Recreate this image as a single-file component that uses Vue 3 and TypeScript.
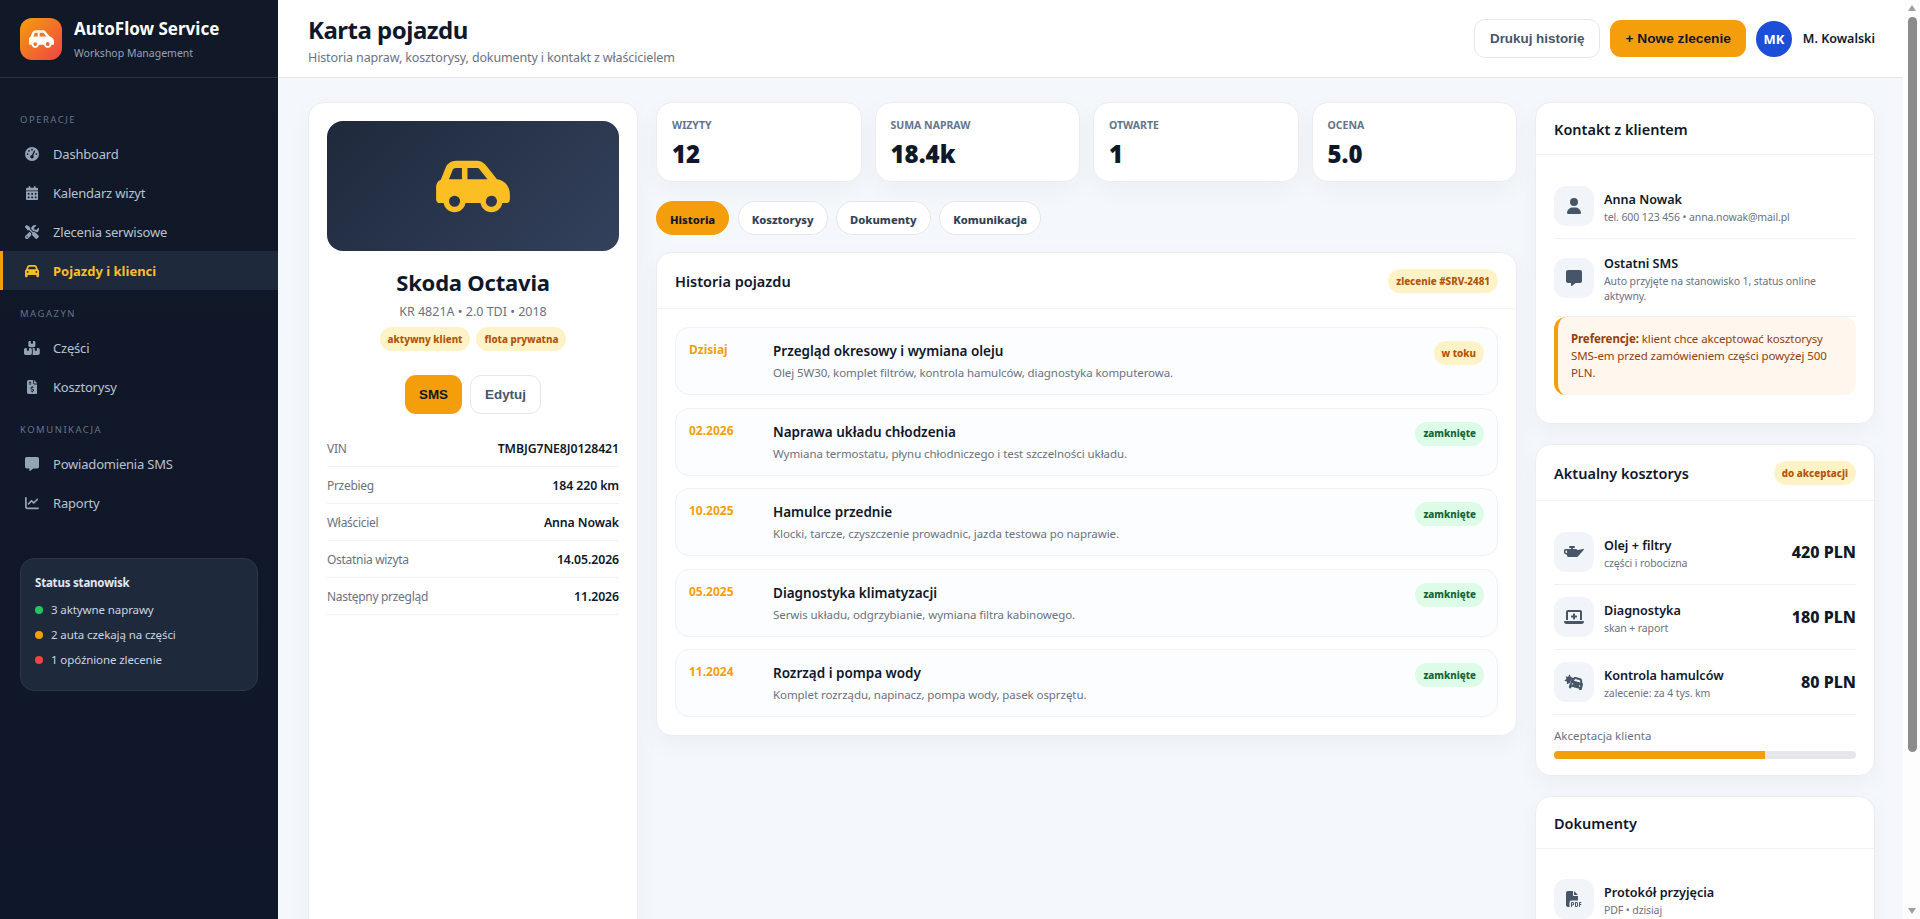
<script setup lang="ts">
interface NavItem { label: string; icon: string; active?: boolean }
interface NavGroup { title: string; items: NavItem[] }
interface Visit { date: string; title: string; desc: string; status: string; open?: boolean }
interface Cost { title: string; sub: string; price: string; icon: string }

const icons: Record<string, { box: string; d: string }> = {
  gauge: { box: '0 0 512 512', d: 'M0 256a256 256 0 1 1 512 0A256 256 0 1 1 0 256zM288 96a32 32 0 1 0 -64 0 32 32 0 1 0 64 0zM256 416c35.3 0 64-28.7 64-64c0-17.4-6.9-33.1-18.1-44.6L366 161.7c5.3-12.1-.2-26.3-12.3-31.6s-26.3 .2-31.6 12.3L257.9 288c-.6 0-1.3 0-1.9 0c-35.3 0-64 28.7-64 64s28.7 64 64 64zM176 144a32 32 0 1 0 -64 0 32 32 0 1 0 64 0zM96 288a32 32 0 1 0 0-64 32 32 0 1 0 0 64zm352-32a32 32 0 1 0 -64 0 32 32 0 1 0 64 0z' },
  calendar: { box: '0 0 448 512', d: 'M128 0c17.7 0 32 14.3 32 32V64H288V32c0-17.7 14.3-32 32-32s32 14.3 32 32V64h48c26.5 0 48 21.5 48 48v48H0V112C0 85.5 21.5 64 48 64H96V32c0-17.7 14.3-32 32-32zM0 192H448V464c0 26.5-21.5 48-48 48H48c-26.5 0-48-21.5-48-48V192zm64 80v32c0 8.8 7.2 16 16 16h32c8.8 0 16-7.2 16-16V272c0-8.8-7.2-16-16-16H80c-8.8 0-16 7.2-16 16zm128 0v32c0 8.8 7.2 16 16 16h32c8.8 0 16-7.2 16-16V272c0-8.8-7.2-16-16-16H208c-8.8 0-16 7.2-16 16zm144-16c-8.8 0-16 7.2-16 16v32c0 8.8 7.2 16 16 16h32c8.8 0 16-7.2 16-16V272c0-8.8-7.2-16-16-16H336zM64 400v32c0 8.8 7.2 16 16 16h32c8.8 0 16-7.2 16-16V400c0-8.8-7.2-16-16-16H80c-8.8 0-16 7.2-16 16zm144-16c-8.8 0-16 7.2-16 16v32c0 8.8 7.2 16 16 16h32c8.8 0 16-7.2 16-16V400c0-8.8-7.2-16-16-16H208zm112 16v32c0 8.8 7.2 16 16 16h32c8.8 0 16-7.2 16-16V400c0-8.8-7.2-16-16-16H336c-8.8 0-16 7.2-16 16z' },
  tools: { box: '0 0 512 512', d: 'M78.6 5C69.1-2.4 55.6-1.5 47 7L7 47c-8.5 8.5-9.4 22-2.1 31.6l80 104c4.5 5.9 11.6 9.4 19 9.4h54.1l109 109c-14.7 29-10 65.4 14.3 89.6l112 112c12.5 12.5 32.8 12.5 45.3 0l64-64c12.5-12.5 12.5-32.8 0-45.3l-112-112c-24.2-24.2-60.6-29-89.6-14.3l-109-109V104c0-7.5-3.5-14.5-9.4-19L78.6 5zM19.9 396.1C7.2 408.8 0 426.1 0 444.1C0 481.6 30.4 512 67.9 512c18 0 35.3-7.2 48-19.9L233.7 374.3c-7.8-20.9-9-43.6-3.6-65.1l-61.7-61.7L19.9 396.1zM512 144c0-10.5-1.1-20.7-3.2-30.5c-2.4-11.2-16.1-14.1-24.2-6l-63.9 63.9c-3 3-7.1 4.7-11.3 4.7H352c-8.8 0-16-7.2-16-16V102.6c0-4.2 1.7-8.3 4.7-11.3l63.9-63.9c8.1-8.1 5.2-21.8-6-24.2C388.7 1.1 378.5 0 368 0C288.5 0 224 64.5 224 144l0 .8 85.3 85.3c36-9.1 75.8 .5 104 28.7L429 274.5c49-23 83-72.8 83-130.5zM56 432a24 24 0 1 1 48 0 24 24 0 1 1 -48 0z' },
  car: { box: '0 0 512 512', d: 'M135.2 117.4L109.1 192H402.9l-26.1-74.6C372.3 104.6 360.2 96 346.6 96H165.4c-13.6 0-25.7 8.6-30.2 21.4zM39.6 196.8L74.8 96.3C88.3 57.8 124.6 32 165.4 32H346.6c40.8 0 77.1 25.8 90.6 64.3l35.2 100.5c23.2 9.6 39.6 32.5 39.6 59.2V400v48c0 17.7-14.3 32-32 32H448c-17.7 0-32-14.3-32-32V400H96v48c0 17.7-14.3 32-32 32H32c-17.7 0-32-14.3-32-32V400 256c0-26.7 16.4-49.6 39.6-59.2zM128 288a32 32 0 1 0 -64 0 32 32 0 1 0 64 0zm288 32a32 32 0 1 0 0-64 32 32 0 1 0 0 64z' },
  carSide: { box: '0 0 640 512', d: 'M171.3 96H224v96H111.3l30.4-75.9C146.5 104 158.2 96 171.3 96zM272 192V96h81.2c9.7 0 18.9 4.4 25 12l67.2 84H272zm256.2 1L428.2 68c-18.2-22.8-45.8-36-75-36H171.3c-39.3 0-74.6 23.9-89.1 60.3L40.6 196.4C16.8 205.8 0 228.9 0 256V368c0 17.7 14.3 32 32 32H65.3c7.6 45.4 47.1 80 94.7 80s87.1-34.6 94.7-80H385.3c7.6 45.4 47.1 80 94.7 80s87.1-34.6 94.7-80H608c17.7 0 32-14.3 32-32V320c0-65.2-48.8-119-111.8-127zM434.7 368a48 48 0 1 1 90.5 32 48 48 0 1 1 -90.5-32zM160 336a48 48 0 1 1 0 96 48 48 0 1 1 0-96z' },
  boxes: { box: '0 0 576 512', d: 'M248 0H208c-26.5 0-48 21.5-48 48V160c0 35.3 28.7 64 64 64H352c35.3 0 64-28.7 64-64V48c0-26.5-21.5-48-48-48H328V80c0 8.8-7.2 16-16 16H264c-8.8 0-16-7.2-16-16V0zM64 256c-35.3 0-64 28.7-64 64V448c0 35.3 28.7 64 64 64H224c35.3 0 64-28.7 64-64V320c0-35.3-28.7-64-64-64H184v80c0 8.8-7.2 16-16 16H120c-8.8 0-16-7.2-16-16V256H64zM352 512H512c35.3 0 64-28.7 64-64V320c0-35.3-28.7-64-64-64H472v80c0 8.8-7.2 16-16 16H408c-8.8 0-16-7.2-16-16V256H352c-15 0-28.8 5.1-39.6 13.8c4.9 10.4 7.6 22 7.6 34.2V464c0 18-6 34.6-16 48H352z' },
  invoice: { box: '0 0 384 512', d: 'M64 0C28.7 0 0 28.7 0 64V448c0 35.3 28.7 64 64 64H320c35.3 0 64-28.7 64-64V160H256c-17.7 0-32-14.3-32-32V0H64zM256 0V128H384L256 0zM64 80c0-8.8 7.2-16 16-16h64c8.8 0 16 7.2 16 16s-7.2 16-16 16H80c-8.8 0-16-7.2-16-16zm0 64c0-8.8 7.2-16 16-16h64c8.8 0 16 7.2 16 16s-7.2 16-16 16H80c-8.8 0-16-7.2-16-16zm128 72c8.8 0 16 7.2 16 16v17.3c8.5 1.2 16.7 3.1 24.1 5.1c8.5 2.3 13.6 11 11.3 19.6s-11 13.6-19.6 11.3c-11.1-3-22-5.2-32.1-5.3c-8.4-.1-17.4 1.8-23.6 5.5c-5.7 3.4-8.1 7.3-8.1 12.8c0 3.7 1.3 6.5 7.3 10.1c6.9 4.1 16.6 7.1 29.2 10.9l.5 .1 0 0 0 0c11.3 3.4 25.3 7.6 36.3 14.6c12.1 7.6 22.4 19.7 22.7 38.2c.3 19.3-9.6 33.3-22.9 41.6c-7.7 4.8-16.4 7.6-25.1 9.1V440c0 8.8-7.2 16-16 16s-16-7.2-16-16V422.2c-11.2-2.1-21.7-5.7-30.9-8.9l0 0c-2.1-.7-4.2-1.4-6.2-2.1c-8.4-2.8-12.9-11.9-10.1-20.2s11.9-12.9 20.2-10.1c2.5 .8 4.8 1.6 7.1 2.4l0 0 0 0 0 0c13.6 4.6 24.6 8.4 36.3 8.7c9.1 .3 17.9-1.7 23.7-5.3c5.1-3.2 7.9-7.3 7.8-14c-.1-4.6-1.8-7.8-7.7-11.6c-6.8-4.3-16.5-7.4-29-11.2l-1.6-.5 0 0c-11-3.3-24.3-7.3-34.8-13.7c-12-7.2-22.6-18.9-22.7-37.3c-.1-19.4 10.8-32.8 23.8-40.5c7.5-4.4 15.8-7.2 24.1-8.7V232c0-8.8 7.2-16 16-16z' },
  message: { box: '0 0 512 512', d: 'M64 0C28.7 0 0 28.7 0 64V352c0 35.3 28.7 64 64 64h96v80c0 6.1 3.4 11.6 8.8 14.3s11.9 2.1 16.8-1.5L309.3 416H448c35.3 0 64-28.7 64-64V64c0-35.3-28.7-64-64-64H64z' },
  chart: { box: '0 0 512 512', d: 'M64 64c0-17.7-14.3-32-32-32S0 46.3 0 64V400c0 44.2 35.8 80 80 80H480c17.7 0 32-14.3 32-32s-14.3-32-32-32H80c-8.8 0-16-7.2-16-16V64zm406.6 86.6c12.5-12.5 12.5-32.8 0-45.3s-32.8-12.5-45.3 0L320 210.7l-57.4-57.4c-12.5-12.5-32.8-12.5-45.3 0l-112 112c-12.5 12.5-12.5 32.8 0 45.3s32.8 12.5 45.3 0L240 221.3l57.4 57.4c12.5 12.5 32.8 12.5 45.3 0l128-128z' },
  user: { box: '0 0 448 512', d: 'M224 256A128 128 0 1 0 224 0a128 128 0 1 0 0 256zm-45.7 48C79.8 304 0 383.8 0 482.3C0 498.7 13.3 512 29.7 512H418.3c16.4 0 29.7-13.3 29.7-29.7C448 383.8 368.2 304 269.7 304H178.3z' },
  oil: { box: '0 0 640 512', d: 'M320 128c17.7 0 32-14.3 32-32s-14.3-32-32-32H192c-17.7 0-32 14.3-32 32s14.3 32 32 32h32v32H144 96 48c-26.5 0-48 21.5-48 48v64.8c0 19 11.2 36.2 28.5 43.9l67.5 30V368c0 26.5 21.5 48 48 48H403.1c18.4 0 35.8-7.9 48-21.7L633.5 187.7c12.3-13.9-.3-35.4-18.4-31.5L448 192l-50.5-25.2c-8.9-4.4-18.7-6.8-28.6-6.8H288V128h32zM96 208v86.1L48 272.8V208H96z' },
  laptop: { box: '0 0 640 512', d: 'M64 96c0-35.3 28.7-64 64-64H512c35.3 0 64 28.7 64 64V352H512V96H128V352H64V96zM0 403.2C0 392.6 8.6 384 19.2 384H620.8c10.6 0 19.2 8.6 19.2 19.2c0 42.4-34.4 76.8-76.8 76.8H76.8C34.4 480 0 445.6 0 403.2zM288 160c0-8.8 7.2-16 16-16h32c8.8 0 16 7.2 16 16v48h48c8.8 0 16 7.2 16 16v32c0 8.8-7.2 16-16 16H352v48c0 8.8-7.2 16-16 16H304c-8.8 0-16-7.2-16-16V272H240c-8.8 0-16-7.2-16-16V224c0-8.8 7.2-16 16-16h48V160z' },
  burst: { box: '0 0 640 512', d: 'M176 8L132 92L56 69L77 161L11 206L96 247L91 326L176 286L197 305L225 215L270 170L298 128L220 92ZM367.7 161.5l135.6 36.3c6.5 1.8 11.3 7.4 11.8 14.2l4.6 56.5-201.5-54 32.2-46.6c3.8-5.6 10.8-8.1 17.3-6.4zM297.8 131.5l-47.9 69.3c-21.6 3-40.3 18.6-46.3 41l-10.4 38.6-16.6 61.8-20.7 77.3c-4.6 17.1 5.6 34.6 22.6 39.2l15.5 4.1c17.1 4.6 34.6-5.6 39.2-22.6l8.3-30.9 247.3 66.3-8.3 30.9c-4.6 17.1 5.6 34.6 22.6 39.2l15.5 4.1c17.1 4.6 34.6-5.6 39.2-22.6l20.7-77.3 16.6-61.8 10.4-38.6c6-22.4-2.5-45.2-19.6-58.7l-6.8-84c-2.7-33.7-26.4-62-59-70.8L377.6 98.9c-32.6-8.7-67.3 4-79.8 32.6zM270 296a24 24 0 1 0 0 48 24 24 0 1 0 0-48zM500 358a24 24 0 1 0 0 48 24 24 0 1 0 0-48z' },
  pdf: { box: '0 0 512 512', d: 'M0 64C0 28.7 28.7 0 64 0H224V128c0 17.7 14.3 32 32 32H384V304H176c-35.3 0-64 28.7-64 64V512H64c-35.3 0-64-28.7-64-64V64zm384 64H256V0L384 128zM176 352h32c30.9 0 56 25.1 56 56s-25.1 56-56 56H192v32c0 8.8-7.2 16-16 16s-16-7.2-16-16V448 368c0-8.8 7.2-16 16-16zm32 80c13.3 0 24-10.7 24-24s-10.7-24-24-24H192v48h16zm96-80h32c26.5 0 48 21.5 48 48v64c0 26.5-21.5 48-48 48H304c-8.8 0-16-7.2-16-16V368c0-8.8 7.2-16 16-16zm32 128c8.8 0 16-7.2 16-16V400c0-8.8-7.2-16-16-16H320v96h16zm80-112c0-8.8 7.2-16 16-16h48c8.8 0 16 7.2 16 16s-7.2 16-16 16H448v32h32c8.8 0 16 7.2 16 16s-7.2 16-16 16H448v48c0 8.8-7.2 16-16 16s-16-7.2-16-16V432 368z' },
}

const nav: NavGroup[] = [
  { title: 'Operacje', items: [
    { label: 'Dashboard', icon: 'gauge' },
    { label: 'Kalendarz wizyt', icon: 'calendar' },
    { label: 'Zlecenia serwisowe', icon: 'tools' },
    { label: 'Pojazdy i klienci', icon: 'car', active: true },
  ] },
  { title: 'Magazyn', items: [
    { label: 'Części', icon: 'boxes' },
    { label: 'Kosztorysy', icon: 'invoice' },
  ] },
  { title: 'Komunikacja', items: [
    { label: 'Powiadomienia SMS', icon: 'message' },
    { label: 'Raporty', icon: 'chart' },
  ] },
]

const workshop = [
  { text: '3 aktywne naprawy', color: '#22c55e' },
  { text: '2 auta czekają na części', color: '#f59e0b' },
  { text: '1 opóźnione zlecenie', color: '#ef4444' },
]

const specs = [
  ['VIN', 'TMBJG7NE8J0128421'],
  ['Przebieg', '184 220 km'],
  ['Właściciel', 'Anna Nowak'],
  ['Ostatnia wizyta', '14.05.2026'],
  ['Następny przegląd', '11.2026'],
]

const stats = [
  ['Wizyty', '12'],
  ['Suma napraw', '18.4k'],
  ['Otwarte', '1'],
  ['Ocena', '5.0'],
]

const tabs = ['Historia', 'Kosztorysy', 'Dokumenty', 'Komunikacja']

const visits: Visit[] = [
  { date: 'Dzisiaj', title: 'Przegląd okresowy i wymiana oleju', desc: 'Olej 5W30, komplet filtrów, kontrola hamulców, diagnostyka komputerowa.', status: 'w toku', open: true },
  { date: '02.2026', title: 'Naprawa układu chłodzenia', desc: 'Wymiana termostatu, płynu chłodniczego i test szczelności układu.', status: 'zamknięte' },
  { date: '10.2025', title: 'Hamulce przednie', desc: 'Klocki, tarcze, czyszczenie prowadnic, jazda testowa po naprawie.', status: 'zamknięte' },
  { date: '05.2025', title: 'Diagnostyka klimatyzacji', desc: 'Serwis układu, odgrzybianie, wymiana filtra kabinowego.', status: 'zamknięte' },
  { date: '11.2024', title: 'Rozrząd i pompa wody', desc: 'Komplet rozrządu, napinacz, pompa wody, pasek osprzętu.', status: 'zamknięte' },
]

const costs: Cost[] = [
  { title: 'Olej + filtry', sub: 'części i robocizna', price: '420 PLN', icon: 'oil' },
  { title: 'Diagnostyka', sub: 'skan + raport', price: '180 PLN', icon: 'laptop' },
  { title: 'Kontrola hamulców', sub: 'zalecenie: za 4 tys. km', price: '80 PLN', icon: 'burst' },
]
</script>

<template>
  <div class="app">
    <aside class="sidebar">
      <div class="brand">
        <div class="brand-logo">
          <svg class="ico" :viewBox="icons.carSide.box" width="25" height="20"><path :d="icons.carSide.d" /></svg>
        </div>
        <div>
          <div class="brand-name">AutoFlow Service</div>
          <div class="brand-sub">Workshop Management</div>
        </div>
      </div>
      <nav class="nav">
        <div v-for="group in nav" :key="group.title" class="nav-group">
          <div class="nav-title">{{ group.title }}</div>
          <a v-for="item in group.items" :key="item.label" class="nav-item" :class="{ active: item.active }">
            <span class="nav-icon"><svg class="ico" :viewBox="icons[item.icon].box" height="14"><path :d="icons[item.icon].d" /></svg></span>
            {{ item.label }}
          </a>
        </div>
      </nav>
      <div class="workshop">
        <div class="workshop-title">Status stanowisk</div>
        <div v-for="row in workshop" :key="row.text" class="workshop-row">
          <span class="dot" :style="{ background: row.color }"></span>{{ row.text }}
        </div>
      </div>
    </aside>

    <main class="main">
      <header class="topbar">
        <div class="top-title">
          <h1>Karta pojazdu</h1>
          <p>Historia napraw, kosztorysy, dokumenty i kontakt z właścicielem</p>
        </div>
        <div class="top-actions">
          <button class="btn btn-light btn-print">Drukuj historię</button>
          <button class="btn btn-primary btn-new">+ Nowe zlecenie</button>
          <div class="avatar">MK</div>
          <span class="user-name">M. Kowalski</span>
        </div>
      </header>

      <div class="content">
        <section class="card vehicle">
          <div class="vehicle-photo">
            <svg class="ico" :viewBox="icons.carSide.box" width="74" height="59"><path :d="icons.carSide.d" /></svg>
          </div>
          <h2>Skoda Octavia</h2>
          <div class="vehicle-sub">KR 4821A • 2.0 TDI • 2018</div>
          <div class="vehicle-tags">
            <span class="pill">aktywny klient</span>
            <span class="pill">flota prywatna</span>
          </div>
          <div class="vehicle-btns">
            <button class="btn btn-primary btn-sms">SMS</button>
            <button class="btn btn-light btn-edit">Edytuj</button>
          </div>
          <div class="specs">
            <div v-for="[label, value] in specs" :key="label" class="spec">
              <span>{{ label }}</span><strong>{{ value }}</strong>
            </div>
          </div>
        </section>

        <div class="center">
          <div class="stats">
            <div v-for="[label, value] in stats" :key="label" class="card stat">
              <div class="stat-label">{{ label }}</div>
              <div class="stat-value">{{ value }}</div>
            </div>
          </div>
          <div class="tabs">
            <button v-for="(tab, i) in tabs" :key="tab" class="tab" :class="{ active: i === 0 }">{{ tab }}</button>
          </div>
          <section class="card">
            <div class="card-head">
              <h3>Historia pojazdu</h3>
              <span class="pill">zlecenie #SRV-2481</span>
            </div>
            <div class="visits">
              <div v-for="visit in visits" :key="visit.date" class="visit">
                <div class="visit-date">{{ visit.date }}</div>
                <div class="visit-body">
                  <div class="visit-title">{{ visit.title }}</div>
                  <div class="visit-desc">{{ visit.desc }}</div>
                </div>
                <span class="pill" :class="{ green: !visit.open }">{{ visit.status }}</span>
              </div>
            </div>
          </section>
        </div>

        <div class="right">
          <section class="card">
            <div class="card-head plain"><h3>Kontakt z klientem</h3></div>
            <div class="card-body contact-body">
              <div class="line">
                <div class="tile"><svg class="ico" :viewBox="icons.user.box" height="16"><path :d="icons.user.d" /></svg></div>
                <div class="line-text">
                  <div class="line-title">Anna Nowak</div>
                  <div class="line-sub">tel. 600 123 456 • anna.nowak@mail.pl</div>
                </div>
              </div>
              <div class="line">
                <div class="tile"><svg class="ico" :viewBox="icons.message.box" height="16"><path :d="icons.message.d" /></svg></div>
                <div class="line-text">
                  <div class="line-title">Ostatni SMS</div>
                  <div class="line-sub">Auto przyjęte na stanowisko 1, status online aktywny.</div>
                </div>
              </div>
              <div class="note"><strong>Preferencje:</strong> klient chce akceptować kosztorysy SMS-em przed zamówieniem części powyżej 500 PLN.</div>
            </div>
          </section>

          <section class="card">
            <div class="card-head">
              <h3>Aktualny kosztorys</h3>
              <span class="pill">do akceptacji</span>
            </div>
            <div class="card-body cost-body">
              <div v-for="cost in costs" :key="cost.title" class="line">
                <div class="tile"><svg class="ico" :viewBox="icons[cost.icon].box" height="16"><path :d="icons[cost.icon].d" fill-rule="evenodd" /></svg></div>
                <div class="line-text">
                  <div class="line-title">{{ cost.title }}</div>
                  <div class="line-sub">{{ cost.sub }}</div>
                </div>
                <div class="price">{{ cost.price }}</div>
              </div>
              <div class="accept-label">Akceptacja klienta</div>
              <div class="progress"><div class="progress-fill" :style="{ width: '70%' }"></div></div>
            </div>
          </section>

          <section class="card">
            <div class="card-head plain"><h3>Dokumenty</h3></div>
            <div class="card-body">
              <div class="line">
                <div class="tile"><svg class="ico" :viewBox="icons.pdf.box" height="16"><path :d="icons.pdf.d" /></svg></div>
                <div class="line-text">
                  <div class="line-title">Protokół przyjęcia</div>
                  <div class="line-sub">PDF • dzisiaj</div>
                </div>
              </div>
            </div>
          </section>
        </div>
      </div>
    </main>

    <div class="scrollbar">
      <span class="arrow up"></span>
      <div class="track"><div class="thumb"></div></div>
      <span class="arrow down"></span>
    </div>
  </div>
</template>

<style>
html, body { margin: 0; height: 100%; overflow: hidden; }
</style>

<style scoped>
.app {
  display: flex;
  height: 919px;
  overflow: hidden;
  background: #f4f7fb;
  color: #0f172a;
  font-family: "Noto Sans", "Open Sans", sans-serif;
  font-size: 13px;
}
.ico { fill: currentColor; display: block; }
h1, h2, h3, p { margin: 0; }

.sidebar {
  width: 278px;
  flex: none;
  background: linear-gradient(180deg, #111827, #0f172a);
  display: flex;
  flex-direction: column;
  color: #cbd5e1;
}
.brand {
  display: flex;
  align-items: center;
  gap: 12px;
  height: 77px;
  padding: 0 20px;
  border-bottom: 1px solid #283244;
}
.brand-logo {
  width: 42px;
  height: 42px;
  border-radius: 12px;
  background: linear-gradient(135deg, #f59e0b, #ef4444);
  display: flex;
  align-items: center;
  justify-content: center;
  color: #fff;
}
.brand-name { color: #fff; font-size: 17px; font-weight: 700; line-height: 22px; }
.brand-sub { color: #94a3b8; font-size: 10.5px; line-height: 14px; margin-top: 6px; }

.nav { padding-top: 34px; }
.nav-group { margin-bottom: 16px; }
.nav-title {
  padding: 0 20px;
  font-size: 9.5px;
  line-height: 16px;
  letter-spacing: 1.5px;
  text-transform: uppercase;
  color: #64748b;
  margin-bottom: 6px;
}
.nav-item {
  display: flex;
  align-items: center;
  height: 39px;
  padding-left: 24px;
  color: #b8c2d0;
  font-size: 13px;
  letter-spacing: -.2px;
}
.nav-icon {
  width: 16px;
  margin-right: 13px;
  display: flex;
  justify-content: center;
  color: #94a3b8;
}
.nav-item.active {
  background: #1e293b;
  color: #fbbf24;
  font-weight: 700;
  letter-spacing: 0;
  border-left: 3px solid #f59e0b;
  padding-left: 21px;
}
.nav-item.active .nav-icon { color: #fbbf24; }

.workshop {
  margin: 20px 20px 0;
  padding: 15px 14px 14px;
  height: 133px;
  box-sizing: border-box;
  background: #1e293b;
  border: 1px solid #2b3648;
  border-radius: 14px;
}
.workshop-title { color: #e2e8f0; font-size: 11.5px; font-weight: 700; line-height: 18px; margin-bottom: 5px; letter-spacing: -.2px; }
.workshop-row { display: flex; align-items: center; gap: 8px; height: 25px; font-size: 11.5px; color: #cbd5e1; letter-spacing: -.1px; }
.dot { width: 8px; height: 8px; border-radius: 50%; }

.main { flex: 1; min-width: 0; display: flex; flex-direction: column; }
.topbar {
  height: 77px;
  flex: none;
  display: flex;
  align-items: center;
  justify-content: space-between;
  padding: 0 28px 0 30px;
  background: #fff;
  border-bottom: 1px solid #e5e7eb;
}
.top-title { padding-top: 4px; }
.topbar h1 { font-size: 24px; line-height: 30px; font-weight: 700; letter-spacing: -.5px; }
.topbar p { font-size: 12.5px; line-height: 16px; color: #6b7280; margin-top: 5px; letter-spacing: -.13px; }
.top-actions { display: flex; align-items: center; gap: 10px; }
.btn {
  font-family: "Liberation Sans", Arial, sans-serif;
  font-size: 13.4px;
  font-weight: 700;
  border-radius: 11px;
  cursor: pointer;
}
.btn-light { height: 39px; padding: 0 14px; background: #fff; border: 1px solid #e5e7eb; color: #475569; }
.btn-print { padding: 0 15px; }
.btn-primary { height: 37px; padding: 0 14px; background: #f59e0b; border: none; color: #111827; }
.btn-new { padding: 0 15px; font-size: 13.7px; }
.avatar {
  width: 36px;
  height: 36px;
  border-radius: 50%;
  background: #1d4ed8;
  color: #fff;
  font-weight: 700;
  font-size: 13px;
  display: flex;
  align-items: center;
  justify-content: center;
}
.user-name { font-size: 12.5px; font-weight: 600; margin-left: 1px; }

.content {
  flex: 1;
  display: grid;
  grid-template-columns: 330px minmax(0, 1fr) 340px;
  gap: 18px;
  padding: 24px 28px 0 30px;
  align-items: start;
}
.card {
  background: #fff;
  border: 1px solid #eaeef3;
  border-radius: 16px;
  box-shadow: 0 8px 24px rgba(15, 23, 42, .04);
}
.vehicle { padding: 18px; height: 900px; box-sizing: border-box; text-align: center; }
.vehicle-photo {
  height: 130px;
  border-radius: 16px;
  background: linear-gradient(135deg, #1e293b, #33415c);
  color: #fbbf24;
  display: flex;
  align-items: center;
  justify-content: center;
}
.vehicle h2 { font-size: 22px; line-height: 30px; font-weight: 700; margin-top: 16px; letter-spacing: -.2px; }
.vehicle-sub { font-size: 12.5px; line-height: 18px; color: #6b7280; margin-top: 6px; }
.vehicle-tags { display: flex; justify-content: center; gap: 6px; margin-top: 6px; }
.vehicle-btns { display: flex; justify-content: center; gap: 8px; margin-top: 24px; }
.btn-sms { height: 39px; width: 57px; padding: 0; }
.btn-edit { width: 71px; padding: 0; }
.specs { margin-top: 16px; text-align: left; }
.spec {
  display: flex;
  justify-content: space-between;
  align-items: center;
  height: 36px;
  border-bottom: 1px solid #eef2f6;
  font-size: 12px;
  letter-spacing: -.3px;
  color: #6b7280;
}
.spec strong { color: #0f172a; font-weight: 600; font-size: 12.3px; letter-spacing: -.1px; }

.pill {
  display: inline-flex;
  align-items: center;
  height: 24px;
  padding: 0 8px;
  border-radius: 999px;
  background: #fef3c7;
  color: #b45309;
  font-size: 9.8px;
  font-weight: 800;
  white-space: nowrap;
}
.pill.green { background: #dcfce7; color: #166534; }

.center { display: flex; flex-direction: column; min-width: 0; }
.stats { display: grid; grid-template-columns: repeat(4, 1fr); gap: 13px; }
.stat { height: 80px; box-sizing: border-box; padding: 15px; }
.stat-label { font-size: 10.5px; line-height: 14px; font-weight: 700; text-transform: uppercase; color: #64748b; }
.stat-value { font-size: 24px; line-height: 30px; font-weight: 900; margin-top: 7px; }
.tabs { display: flex; gap: 8.5px; margin-top: 19px; }
.tab {
  height: 34px;
  padding: 2px 13px 0;
  border: 1px solid #e5e7eb;
  border-radius: 999px;
  background: #fff;
  color: #334155;
  font-family: "Noto Sans", sans-serif;
  font-size: 11.2px;
  font-weight: 800;
}
.tab.active { background: #f59e0b; border-color: #f59e0b; color: #111827; }
.tabs + .card { margin-top: 17px; }

.card-head {
  display: flex;
  align-items: center;
  justify-content: space-between;
  min-height: 24px;
  padding: 16px 18px 15px;
  border-bottom: 1px solid #eef2f6;
}
.card-head.plain { padding: 14px 18px 13px; }
.card-head h3 { font-size: 14.5px; line-height: 20px; font-weight: 600; }

.visits { padding: 18px; display: flex; flex-direction: column; gap: 12.5px; }
.visit {
  display: flex;
  align-items: flex-start;
  height: 68px;
  box-sizing: border-box;
  padding: 13px;
  background: #fbfdff;
  border: 1px solid #eef2f6;
  border-radius: 14px;
}
.visit-date { width: 84px; flex: none; font-size: 12px; line-height: 18px; font-weight: 700; color: #f59e0b; }
.visit-body { flex: 1; min-width: 0; }
.visit-title { font-size: 13.5px; line-height: 20px; font-weight: 600; }
.visit-desc { font-size: 11.5px; line-height: 18px; color: #6b7280; margin-top: 3px; letter-spacing: -.07px; }

.right { display: flex; flex-direction: column; gap: 20px; min-width: 0; }
.card-body { padding: 18px; }
.contact-body { padding: 19px 18px 28px; }
.cost-body { padding: 19px 18px 16px; }
.line {
  display: flex;
  align-items: center;
  gap: 10px;
  padding: 12px 0;
  border-bottom: 1px solid #eef2f6;
}
.tile {
  width: 40px;
  height: 40px;
  flex: none;
  border-radius: 12px;
  background: #f1f5f9;
  color: #475569;
  display: flex;
  align-items: center;
  justify-content: center;
}
.line-text { flex: 1; min-width: 0; padding-top: 3px; }
.line-title { font-size: 12.6px; line-height: 19px; font-weight: 600; }
.line-sub { font-size: 10.5px; line-height: 15px; color: #6b7280; margin-top: 1px; letter-spacing: -.1px; }
.price { font-size: 16px; font-weight: 800; }
.note {
  padding: 13px 14px 14px 13px;
  border-left: 4px solid #f59e0b;
  border-radius: 12px;
  background: #fff7ed;
  color: #92400e;
  font-size: 11.5px;
  line-height: 17px;
  letter-spacing: -.09px;
}
.note strong { font-weight: 700; }
.accept-label { font-size: 11.5px; line-height: 16px; color: #6b7280; margin-top: 13px; }
.progress { height: 8px; border-radius: 8px; background: #e5e7eb; overflow: hidden; margin-top: 7px; }
.progress-fill { height: 100%; background: #f59e0b; }

.scrollbar {
  width: 17px;
  flex: none;
  box-sizing: border-box;
  padding-left: 1px;
  display: flex;
  flex-direction: column;
  align-items: center;
  background: #fdfdfd;
}
.arrow { width: 0; height: 0; border-left: 4.5px solid transparent; border-right: 4.5px solid transparent; flex: none; }
.arrow.up { border-bottom: 6px solid #a0a0a0; margin: 5px 0 6px; }
.arrow.down { border-top: 6px solid #a0a0a0; margin: 6px 0 5px; }
.track { flex: 1; width: 100%; display: flex; justify-content: center; }
.thumb { width: 9px; height: 735px; background: #8b8b8b; border-radius: 5px; }
</style>
